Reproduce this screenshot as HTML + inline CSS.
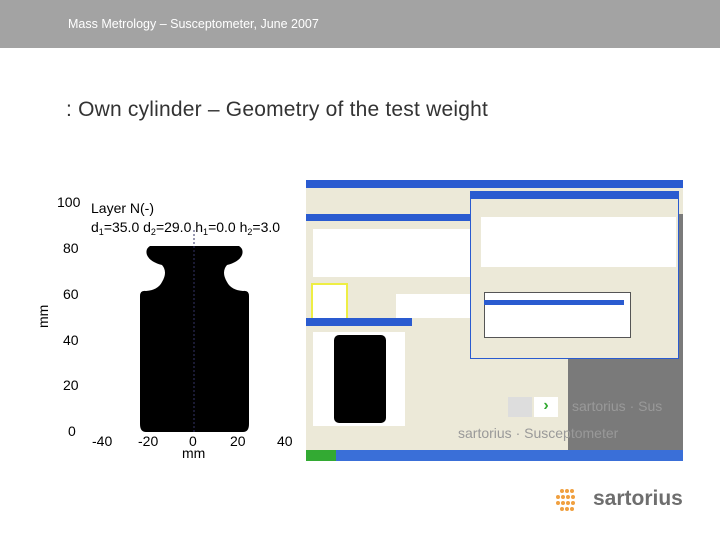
<!DOCTYPE html>
<html><head><style>
body{margin:0;width:720px;height:540px;background:#fff;position:relative;overflow:hidden;font-family:"Liberation Sans",sans-serif}
.hdr{position:absolute;left:0;top:0;width:720px;height:48px;background:#a3a3a3}
.hdr span{position:absolute;left:68px;top:17px;color:#fff;font-size:12.5px}
.title{position:absolute;left:66px;top:98px;font-size:21px;color:#333;letter-spacing:0.2px}
.a{position:absolute}
</style></head><body>
<div class="hdr"><span>Mass Metrology – Susceptometer, June 2007</span></div>
<div class="title">: Own cylinder – Geometry of the test weight</div>

<svg class="a" style="left:30px;top:185px" width="270" height="275" viewBox="30 185 270 275">
<g font-family="Liberation Sans" font-size="14" fill="#000">
<text x="57" y="207">100</text><text x="63" y="253">80</text><text x="63" y="299">60</text>
<text x="63" y="345">40</text><text x="63" y="390">20</text><text x="68" y="436">0</text>
<text x="91" y="213">Layer N(-)</text>
<text x="91" y="232">d<tspan font-size="9" dy="3">1</tspan><tspan dy="-3">=35.0 d</tspan><tspan font-size="9" dy="3">2</tspan><tspan dy="-3">=29.0 h</tspan><tspan font-size="9" dy="3">1</tspan><tspan dy="-3">=0.0 h</tspan><tspan font-size="9" dy="3">2</tspan><tspan dy="-3">=3.0</tspan></text>
<text x="92" y="446">-40</text><text x="138" y="446">-20</text><text x="189" y="446">0</text><text x="230" y="446">20</text><text x="277" y="446">40</text>
<text x="182" y="458">mm</text>
<text transform="translate(48,328) rotate(-90)">mm</text>
</g>
<path d="M146,432 Q140,432 140,424 L140,296 Q140,290 146,291 Q158,290 162,282 Q168,272 162,265 Q150,262 147,255 Q145,249 150,246 L239,246 Q244,249 242,255 Q239,262 227,265 Q221,272 227,282 Q231,290 243,291 Q249,290 249,296 L249,424 Q249,432 243,432 Z" fill="#000"/>
<line x1="194" y1="230" x2="194" y2="432" stroke="#336" stroke-dasharray="2,2"/>
</svg>

<div class="a" style="left:306px;top:180px;width:377px;height:281px;background:#7a7a7a"></div>
<div class="a" style="left:306px;top:180px;width:377px;height:8px;background:#2a5bd0"></div>
<div class="a" style="left:306px;top:188px;width:377px;height:26px;background:#ece9d8"></div>
<div class="a" style="left:306px;top:214px;width:262px;height:240px;background:#ece9d8"></div>
<div class="a" style="left:306px;top:214px;width:262px;height:7px;background:#2a5bd0"></div>
<div class="a" style="left:313px;top:229px;width:160px;height:48px;background:#fff"></div>
<div class="a" style="left:313px;top:285px;width:33px;height:36px;background:#fff;outline:2px solid #ee4"></div>
<div class="a" style="left:396px;top:294px;width:78px;height:24px;background:#fff"></div>
<div class="a" style="left:470px;top:191px;width:207px;height:166px;background:#ece9d8;border:1px solid #2a5bd0"></div>
<div class="a" style="left:470px;top:191px;width:208px;height:8px;background:#2a5bd0"></div>
<div class="a" style="left:481px;top:217px;width:195px;height:50px;background:#fff"></div>
<div class="a" style="left:484px;top:292px;width:145px;height:44px;background:#fff;border:1px solid #555"></div>
<div class="a" style="left:484px;top:300px;width:140px;height:5px;background:#2a5bd0"></div>
<div class="a" style="left:306px;top:318px;width:106px;height:143px;background:#ece9d8"></div>
<div class="a" style="left:306px;top:318px;width:106px;height:8px;background:#2a5bd0"></div>
<div class="a" style="left:313px;top:332px;width:92px;height:94px;background:#fff"></div>
<div class="a" style="left:334px;top:335px;width:52px;height:88px;background:#000;border-radius:5px"></div>
<div class="a" style="left:306px;top:450px;width:377px;height:11px;background:#3a6fd8"></div>
<div class="a" style="left:306px;top:450px;width:30px;height:11px;background:#3a3"></div>
<div class="a" style="left:508px;top:397px;width:24px;height:20px;background:#ddd"></div>
<div class="a" style="left:534px;top:397px;width:24px;height:20px;background:#fff;color:#3a3;font-weight:bold;font-size:16px;text-align:center">›</div>
<div class="a" style="left:572px;top:398px;color:#999;font-size:14px">sartorius · Sus</div>
<div class="a" style="left:458px;top:425px;color:#999;font-size:14px">sartorius · Susceptometer</div>

<svg class="a" style="left:548px;top:488px" width="36" height="26">
<g fill="#f0a040"><circle cx="14" cy="3" r="2"/><circle cx="19" cy="3" r="2"/><circle cx="24" cy="3" r="2"/>
<circle cx="10" cy="9" r="2"/><circle cx="15" cy="9" r="2"/><circle cx="20" cy="9" r="2"/><circle cx="25" cy="9" r="2"/>
<circle cx="10" cy="15" r="2"/><circle cx="15" cy="15" r="2"/><circle cx="20" cy="15" r="2"/><circle cx="25" cy="15" r="2"/>
<circle cx="14" cy="21" r="2"/><circle cx="19" cy="21" r="2"/><circle cx="24" cy="21" r="2"/></g></svg>
<div class="a" style="left:593px;top:487px;font-size:21px;color:#6e6e6e;font-weight:bold">sartorius</div>
</body></html>
